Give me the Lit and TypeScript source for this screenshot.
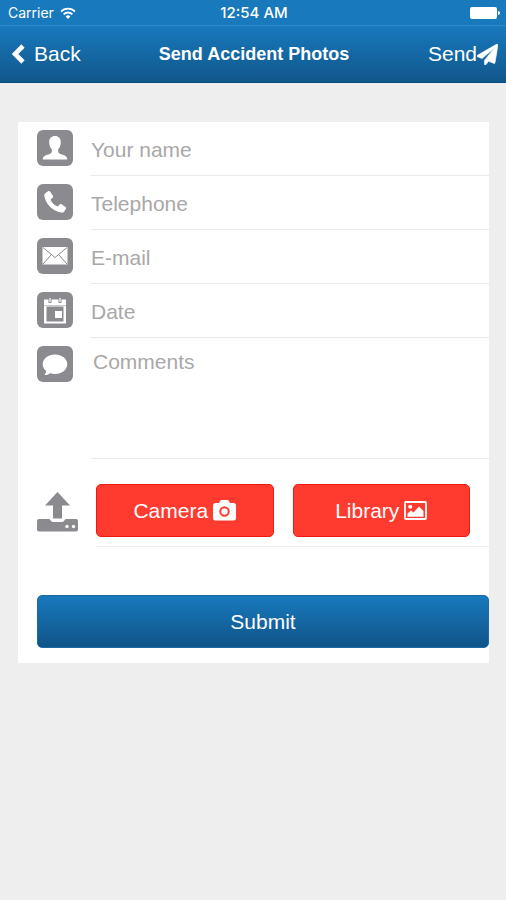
import { LitElement, html, svg, css } from "lit";
import { customElement } from "lit/decorators.js";

const tile = (glyph: unknown) => html`
  <svg class="tile" viewBox="0 0 36 36" aria-hidden="true">
    <rect width="36" height="36" rx="6" fill="#8b8a8e" />
    ${glyph}
  </svg>
`;

const person = svg`<path fill="#fff" d="M18 6c3.600 0 5.800 2.400 5.800 6 0 3.200-1 5.700-2.600 7.300v2.500c0 1.600 2 2.200 4.500 3 2.900.9 4.600 2 4.600 4.700H5.700c0-2.700 1.700-3.800 4.600-4.700 2.500-.8 4.500-1.400 4.500-3v-2.500c-1.600-1.600-2.600-4.100-2.600-7.300 0-3.600 2.200-6 5.800-6z"/>`;

const phone = svg`<path fill="#fff" d="M8.300 9.200 11 7.300c.8-.5 1.700-.3 2.200.4l2.700 4c.5.8.3 1.600-.4 2.200l-1.900 1.400c.8 3.200 4 6.300 7.300 7.300l1.500-1.900c.5-.7 1.400-.9 2.200-.4l3.700 2.400c.8.5 1 1.400.5 2.200l-1.600 2.600c-.6 1-1.700 1.300-3 1.100C15.800 27.400 8.300 19.500 7.300 12c-.2-1.200.1-2.200 1-2.800z"/>`;

const mail = svg`
  <rect x="5.500" y="9" width="25" height="17.500" fill="#fff"/>
  <path d="M6 9.500 18 19.500 30 9.500M6 26l8-9M30 26l-8-9" fill="none" stroke="#8b8a8e" stroke-width="1"/>`;

const calendar = svg`
  <path fill="#fff" d="M7 7.500h22v24H7z"/>
  <path fill="#8b8a8e" d="M9.500 14.500h17v15h-17z"/>
  <path fill="#fff" d="M18 19h7v7h-7z"/>
  <path d="M7 13.500h22" stroke="#c9c8cb" stroke-width="1"/>
  <path d="M13 6v5M23 6v5" stroke="#8b8a8e" stroke-width="3"/>
  <path d="M13 6v4M23 6v4" stroke="#fff" stroke-width="1.200"/>`;

const bubble = svg`<path fill="#fff" d="M18 8.500c6.900 0 12.300 4.300 12.300 9.700S24.900 28 18 28c-1.700 0-3.300-.3-4.800-.8-1.600 1.200-3.700 1.900-6 1.900 1.200-1.100 1.800-2.500 1.900-4.200-2.100-1.700-3.400-4.100-3.400-6.700 0-5.400 5.400-9.700 12.300-9.700z"/>`;

const fields = [
  { id: "name", text: "Your name", type: "text", glyph: person },
  { id: "phone", text: "Telephone", type: "tel", glyph: phone },
  { id: "email", text: "E-mail", type: "email", glyph: mail },
  { id: "date", text: "Date", type: "text", glyph: calendar },
];

@customElement("app-root")
export class AppRoot extends LitElement {
  static styles = css`
    :host {
      display: block;
      min-height: 100vh;
      background: #eee;
      font-family: "Liberation Sans", Arial, sans-serif;
      font-size: 21px;
    }
    * {
      box-sizing: border-box;
    }
    svg {
      display: block;
      flex: none;
    }
    .status {
      display: grid;
      grid-template-columns: 1fr auto 1fr;
      align-items: center;
      height: 26px;
      padding: 0 6px 0 8px;
      border-bottom: 1px solid #3189c6;
      background: #1879bd;
      color: #fff;
      font-family: Inter, sans-serif;
      font-size: 14px;
    }
    .carrier {
      display: flex;
      align-items: center;
      gap: 6px;
    }
    .clock {
      font-size: 15px;
      font-weight: 500;
    }
    .wifi {
      width: 16px;
      height: 12px;
    }
    .battery {
      width: 30px;
      height: 12px;
      justify-self: end;
    }
    .bar {
      display: grid;
      grid-template-columns: 1fr auto 1fr;
      align-items: center;
      height: 57px;
      padding: 0 8px 0 10px;
      border-bottom: 1px solid #0c4c7c;
      background: linear-gradient(#1879bd, #10578a);
      color: #fff;
    }
    .title {
      margin: 0;
      font-size: 18px;
      font-weight: 700;
    }
    .nav {
      display: flex;
      align-items: center;
      padding: 0;
      border: 0;
      background: none;
      color: inherit;
      font: inherit;
    }
    .back {
      justify-self: start;
      gap: 8px;
    }
    .send {
      justify-self: end;
    }
    .chevron {
      width: 16px;
      height: 20px;
    }
    .plane {
      width: 21px;
      height: 21px;
    }
    .card {
      display: flex;
      flex-direction: column;
      margin: 39px 17px 0 18px;
      padding: 0 0 15px 19px;
      background: #fff;
    }
    .row {
      display: flex;
      gap: 18px;
    }
    .tile {
      width: 36px;
      height: 36px;
      margin-top: 8px;
    }
    .input {
      flex: 1;
      min-width: 0;
      height: 54px;
      padding: 2px 0 0;
      border: 0;
      border-bottom: 1px solid #e9e9e9;
      border-radius: 0;
      outline: 0;
      background: none;
      color: #333;
      font: inherit;
    }
    .input::placeholder {
      color: #a8a8a8;
      opacity: 1;
    }
    .comments {
      height: 121px;
      padding: 12px 2px;
      line-height: 24px;
      resize: none;
    }
    .upload {
      width: 41px;
      height: 41px;
      margin-top: 32px;
    }
    .attach {
      flex: 1;
      display: flex;
      gap: 19px;
      padding: 25px 19px 9px 0;
      border-bottom: 1px solid #eee;
    }
    .button {
      flex: 1;
      display: flex;
      align-items: center;
      justify-content: center;
      gap: 5px;
      height: 53px;
      padding: 0;
      border: 1px solid #ee1a10;
      border-radius: 5px;
      background: #ff3a2f;
      color: #fff;
      font: inherit;
    }
    .camera {
      width: 23px;
      height: 21px;
    }
    .picture {
      width: 23px;
      height: 19px;
    }
    .submit {
      flex: none;
      margin-top: 48px;
      border-color: #1a6aa5;
      background: linear-gradient(#1879bd, #105488);
    }
  `;

  render() {
    return html`
      <div class="status">
        <div class="carrier">
          <span>Carrier</span>
          <svg class="wifi" viewBox="0 0 16 12" fill="none" stroke="#fff" stroke-width="1.800" aria-hidden="true">
            <path d="M1 4.500a10 10 0 0 1 14 0" />
            <path d="M3.600 7.300a6.300 6.300 0 0 1 8.800 0" />
            <path d="M8 12 5.600 9.500a3.500 3.500 0 0 1 4.800 0z" fill="#fff" stroke="none" />
          </svg>
        </div>
        <span class="clock">12:54 AM</span>
        <svg class="battery" viewBox="0 0 30 12" fill="#fff" aria-hidden="true">
          <rect width="27" height="12" rx="2" />
          <path d="M28 4c1.300.3 2 1 2 2s-.7 1.700-2 2z" />
        </svg>
      </div>
      <header class="bar">
        <button class="nav back" type="button">
          <svg class="chevron" viewBox="0 0 16 20" fill="none" stroke="#fff" stroke-width="4.600" aria-hidden="true">
            <path d="M13 2 5 10l8 8" />
          </svg>
          Back
        </button>
        <h1 class="title">Send Accident Photos</h1>
        <button class="nav send" type="button">
          Send
          <svg class="plane" viewBox="0 0 1792 1792" fill="#fff" stroke="#fff" stroke-width="50" aria-hidden="true">
            <path d="M1764 11q33 24 27 64l-256 1536q-5 29-32 45-14 8-31 8-11 0-24-5l-453-185-242 295q-18 23-49 23-13 0-22-4-19-7-30.500-23.500t-11.500-36.500v-349l864-1059-1069 925-395-162q-37-14-40-55-2-40 32-59l1664-960q15-9 32-9 20 0 36 11z" />
          </svg>
        </button>
      </header>
      <form class="card">
        ${fields.map(
          (f) => html`
            <div class="row">
              <label for=${f.id}>${tile(f.glyph)}</label>
              <input class="input" id=${f.id} type=${f.type} placeholder=${f.text} aria-label=${f.text} />
            </div>
          `
        )}
        <div class="row">
          <label for="comments">${tile(bubble)}</label>
          <textarea class="input comments" id="comments" placeholder="Comments" aria-label="Comments"></textarea>
        </div>
        <div class="row">
          <svg class="upload" viewBox="0 0 41 41" fill="#8b8a8e" aria-hidden="true">
            <path d="M20.500 1 33 14.500h-8V27.500h-9V14.500H8z" />
            <path d="M2 28h10c1.500 0 1.500 3 4 3h9c2.500 0 2.500-3 4-3h10q2 0 2 2v8.500q0 2-2 2H2q-2 0-2-2V30q0-2 2-2z" />
            <circle cx="30" cy="35.500" r="1.700" fill="#fff" />
            <circle cx="36.500" cy="35.500" r="1.700" fill="#fff" />
          </svg>
          <div class="attach">
            <button class="button" type="button">
              Camera
              <svg class="camera" viewBox="0 0 23 21" aria-hidden="true">
                <path fill="#fff" d="M2.500 3H6l1.200-2.200Q7.700 0 8.700 0h5.600q1 0 1.500.8L17 3h3.500Q23 3 23 5.500v12.500q0 2.500-2.500 2.500h-18Q0 20.500 0 18V5.500Q0 3 2.500 3z" />
                <circle cx="11.500" cy="11.500" r="4.200" fill="none" stroke="#ff3a2f" stroke-width="2" />
              </svg>
            </button>
            <button class="button" type="button">
              Library
              <svg class="picture" viewBox="0 0 23 19" fill="#fff" aria-hidden="true">
                <rect x="1" y="1" width="21" height="17" rx="1" fill="none" stroke="#fff" stroke-width="1.800" />
                <circle cx="6.200" cy="5.800" r="2" />
                <path d="M3.500 15.800v-3.300L7 9.500l2.500 2L15 5.500l4.500 4.500v5.800z" />
              </svg>
            </button>
          </div>
        </div>
        <button class="button submit" type="button">Submit</button>
      </form>
    `;
  }
}
